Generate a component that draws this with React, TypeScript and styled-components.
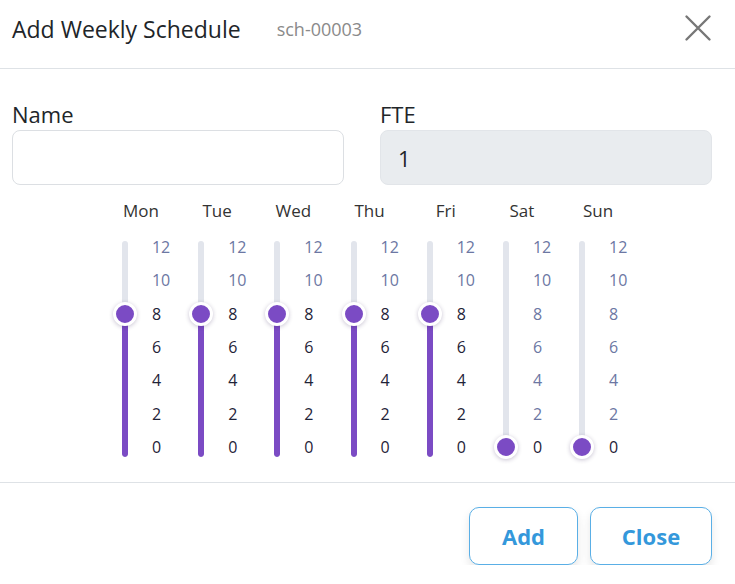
import React from "react";
import styled, { createGlobalStyle } from "styled-components";

const GlobalStyle = createGlobalStyle`
  html, body {
    margin: 0;
    padding: 0;
    background: #ffffff;
  }
  body {
    font-family: "Open Sans", "Noto Sans", Arial, sans-serif;
    color: #212529;
  }
`;

const Modal = styled.div`
  width: 735px;
  background: #ffffff;
`;

const Header = styled.header`
  display: flex;
  align-items: flex-start;
  height: 69px;
  box-sizing: border-box;
  padding: 13px 23px 0 12px;
  border-bottom: 1px solid #dee2e6;
`;

const Title = styled.h1`
  margin: 0;
  font-size: 23px;
  font-weight: 400;
  line-height: 32px;
  color: #212529;
`;

const Code = styled.span`
  margin-left: 36px;
  font-size: 18px;
  line-height: 32px;
  color: #8a8a8a;
  align-self: baseline;
`;

const CloseIcon = styled.button`
  margin-left: auto;
  margin-top: 1px;
  width: 28px;
  height: 28px;
  padding: 0;
  border: none;
  background: transparent;
  display: flex;
  align-items: center;
  justify-content: center;
  cursor: pointer;
`;

const Body = styled.div`
  padding: 30px 23px 25px 12px;
  border-bottom: 1px solid #dee2e6;
`;

const FieldRow = styled.div`
  display: grid;
  grid-template-columns: 1fr 1fr;
  gap: 36px;
`;

const Field = styled.div`
  display: flex;
  flex-direction: column;
`;

const Label = styled.label`
  font-size: 22px;
  line-height: 30px;
  color: #212529;
`;

const Input = styled.input<{ $readOnly?: boolean }>`
  margin-top: 1px;
  height: 55px;
  box-sizing: border-box;
  border: 1px solid ${(p) => (p.$readOnly ? "#e2e5e9" : "#dcdfe3")};
  border-radius: 8px;
  background: ${(p) => (p.$readOnly ? "#e9ecef" : "#ffffff")};
  padding: 0 17px;
  font-family: inherit;
  font-size: 22px;
  color: #212529;
  outline: none;
`;

const Week = styled.div`
  display: flex;
  justify-content: center;
  gap: 24.2px;
  margin-top: 14px;
  padding-left: 15px;
`;

const Day = styled.div`
  width: 52px;
  display: flex;
  flex-direction: column;
`;

const DayName = styled.div`
  font-size: 17px;
  line-height: 24px;
  text-align: center;
  color: #333333;
`;

const SliderBox = styled.div`
  position: relative;
  margin-top: 18px;
  height: 216px;
`;

const Rail = styled.div`
  margin-left: 7px;
  width: 6px;
  height: 100%;
  border-radius: 3px;
  background: #e2e5ec;
  overflow: hidden;
  display: flex;
  flex-direction: column;
  justify-content: flex-end;
`;

const Fill = styled.div`
  width: 100%;
  background: #7b4bc4;
  border-radius: 0 0 3px 3px;
`;

const Thumb = styled.div`
  position: absolute;
  left: 1px;
  width: 18px;
  height: 18px;
  margin-top: -9px;
  border-radius: 50%;
  background: #7b4bc4;
  border: 3px solid #ffffff;
  box-shadow: 0 1px 4px rgba(40, 20, 80, 0.25);
  box-sizing: content-box;
  transform: translate(-3px, -3px);
`;

const Mark = styled.span<{ $on: boolean }>`
  position: absolute;
  left: 37px;
  margin-top: -10px;
  font-size: 16px;
  line-height: 20px;
  color: ${(p) => (p.$on ? "#1f2338" : "#6c77a3")};
`;

const Footer = styled.footer`
  display: flex;
  justify-content: flex-end;
  gap: 12px;
  padding: 24px 23px 0 12px;
`;

const Button = styled.button<{ $w: number }>`
  width: ${(p) => p.$w}px;
  height: 58px;
  border: 1px solid #5aafe6;
  border-radius: 10px;
  background: #ffffff;
  box-shadow: 0 5px 10px rgba(0, 0, 0, 0.1);
  font-family: inherit;
  font-size: 22px;
  font-weight: 700;
  color: #3498db;
  cursor: pointer;
`;

const MAX = 12;
const TOP = 6;
const RANGE = 200;
const marks = [12, 10, 8, 6, 4, 2, 0];

function yFor(v: number) {
  return TOP + (1 - v / MAX) * RANGE;
}

function DaySlider({ name, value }: { name: string; value: number }) {
  const y = yFor(value);
  return (
    <Day>
      <DayName>{name}</DayName>
      <SliderBox>
        <Rail>
          <Fill style={{ height: 216 - y }} />
        </Rail>
        {marks.map((m) => (
          <Mark key={m} $on={m <= value} style={{ top: yFor(m) }}>
            {m}
          </Mark>
        ))}
        <Thumb style={{ top: y }} />
      </SliderBox>
    </Day>
  );
}

const schedule = [
  { name: "Mon", value: 8 },
  { name: "Tue", value: 8 },
  { name: "Wed", value: 8 },
  { name: "Thu", value: 8 },
  { name: "Fri", value: 8 },
  { name: "Sat", value: 0 },
  { name: "Sun", value: 0 },
];

export default function App() {
  return (
    <>
      <GlobalStyle />
      <Modal>
        <Header>
          <Title>Add Weekly Schedule</Title>
          <Code>sch-00003</Code>
          <CloseIcon aria-label="Close">
            <svg width="28" height="28" viewBox="0 0 28 28">
              <path
                d="M2.5 2.5 L25.5 25.5 M25.5 2.5 L2.5 25.5"
                stroke="#777777"
                strokeWidth="2.4"
                strokeLinecap="round"
              />
            </svg>
          </CloseIcon>
        </Header>
        <Body>
          <FieldRow>
            <Field>
              <Label>Name</Label>
              <Input defaultValue="" />
            </Field>
            <Field>
              <Label>FTE</Label>
              <Input $readOnly readOnly value="1" />
            </Field>
          </FieldRow>
          <Week>
            {schedule.map((d) => (
              <DaySlider key={d.name} name={d.name} value={d.value} />
            ))}
          </Week>
        </Body>
        <Footer>
          <Button $w={109}>Add</Button>
          <Button $w={122}>Close</Button>
        </Footer>
      </Modal>
    </>
  );
}
